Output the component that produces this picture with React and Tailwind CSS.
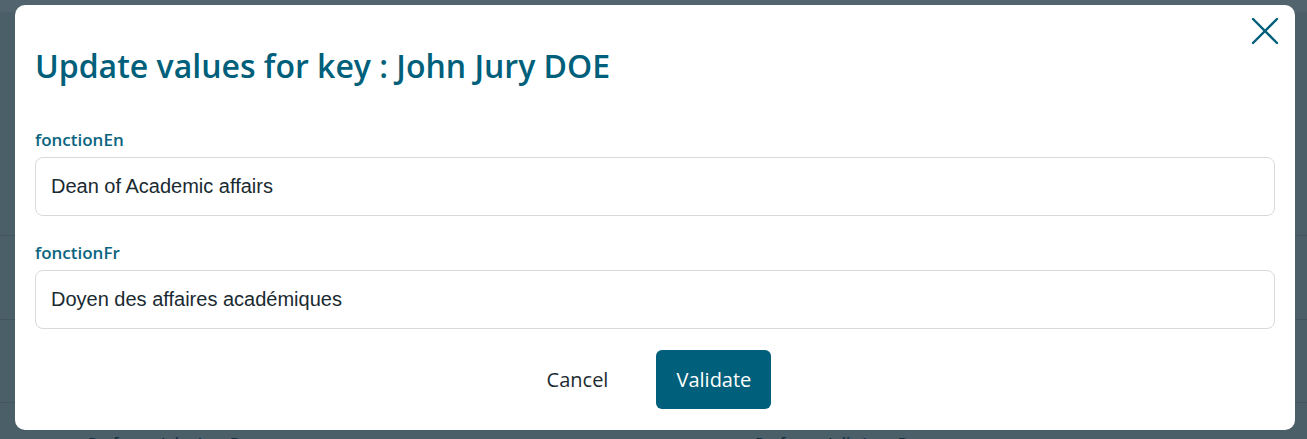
import { X } from 'lucide-react'

const fields = [
  { key: 'fonctionEn', value: 'Dean of Academic affairs' },
  { key: 'fonctionFr', value: 'Doyen des affaires académiques' },
]

function PageBehind() {
  // dimmed list page under the overlay
  return (
    <div className="flex h-[439px] flex-col bg-[#4b5f69]">
      <div className="h-[12px] bg-[#52656e]" />
      <div className="h-[224px] border-b border-[#43565f]" />
      <div className="h-[84px] border-b border-[#43565f]" />
      <div className="h-[83px] border-b border-[#43565f]" />
      <div className="flex h-[35px] items-end">
        <span className="ml-[88px] w-[180px] translate-y-[15px] font-['Open_Sans',sans-serif] text-[15px] font-semibold text-[#13303c]">
          Professor John Jury Doe
        </span>
        <span className="ml-[487px] translate-y-[15px] font-['Open_Sans',sans-serif] text-[15px] font-semibold text-[#13303c]">
          Professor Jolie Jane Doe
        </span>
      </div>
    </div>
  )
}

function FieldRow({ field }) {
  return (
    <div className="flex flex-col">
      <label className="font-['Open_Sans',sans-serif] text-[17px] font-semibold leading-[22px] text-[#0b6480]">
        {field.key}
      </label>
      <input
        defaultValue={field.value}
        className="mt-[6px] h-[59px] w-full rounded-[8px] border border-[#d9d9d9] bg-white px-[15px] font-['Liberation_Sans',Arial,sans-serif] text-[20px] text-[#1a2a31] outline-none"
      />
    </div>
  )
}

export default function App() {
  return (
    <div className="relative h-[439px] w-[1307px] overflow-hidden">
      <PageBehind />
      <div className="absolute left-[15px] top-[5px] h-[425px] w-[1280px] rounded-[10px] bg-white px-[20px]">
        <button className="absolute right-[6px] top-[2px] text-[#005f7a]">
          <X size={48} strokeWidth={1.2} />
        </button>
        <h2 className="mt-[39px] font-['Open_Sans',sans-serif] text-[32px] font-semibold leading-[44px] text-[#005f7a]">
          Update values for key : John Jury DOE
        </h2>
        <div className="mt-[41px] flex flex-col gap-[26px]">
          {fields.map((f) => (
            <FieldRow key={f.key} field={f} />
          ))}
        </div>
        <div className="mt-[21px] flex items-center justify-center gap-[24px] pr-[16px]">
          <button className="px-[24px] font-['Open_Sans',sans-serif] text-[20px] text-[#1c2b32]">
            Cancel
          </button>
          <button className="h-[59px] w-[115px] rounded-[6px] bg-[#005f7a] font-['Open_Sans',sans-serif] text-[20px] text-white">
            Validate
          </button>
        </div>
      </div>
    </div>
  )
}
